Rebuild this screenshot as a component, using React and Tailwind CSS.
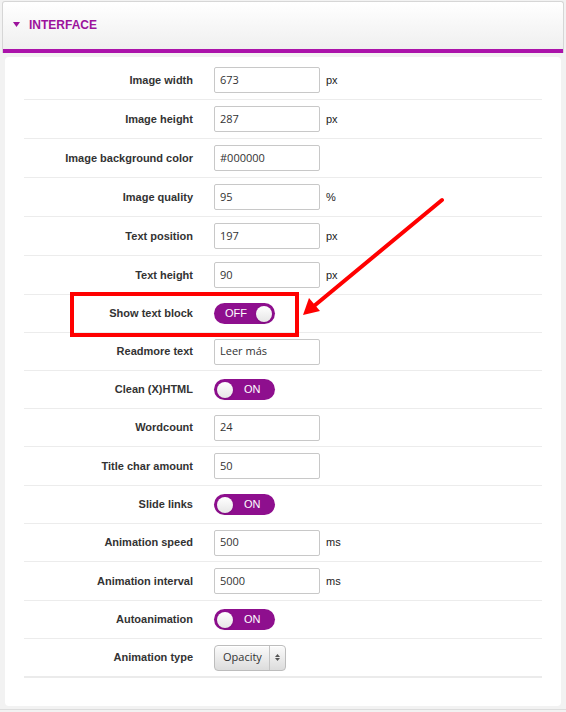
import React from 'react'

const rows = [
  { label: 'Image width', type: 'input', value: '673', unit: 'px', h: 'h-[39px]' },
  { label: 'Image height', type: 'input', value: '287', unit: 'px', h: 'h-[39px]' },
  { label: 'Image background color', type: 'input', value: '#000000', h: 'h-[39px]' },
  { label: 'Image quality', type: 'input', value: '95', unit: '%', h: 'h-[39px]' },
  { label: 'Text position', type: 'input', value: '197', unit: 'px', h: 'h-[39px]' },
  { label: 'Text height', type: 'input', value: '90', unit: 'px', h: 'h-[39px]' },
  { label: 'Show text block', type: 'toggle', on: false, h: 'h-[38px]' },
  { label: 'Readmore text', type: 'input', value: 'Leer más', h: 'h-[38px]' },
  { label: 'Clean (X)HTML', type: 'toggle', on: true, h: 'h-[38px]' },
  { label: 'Wordcount', type: 'input', value: '24', h: 'h-[38px]' },
  { label: 'Title char amount', type: 'input', value: '50', h: 'h-[39px]' },
  { label: 'Slide links', type: 'toggle', on: true, h: 'h-[38px]' },
  { label: 'Animation speed', type: 'input', value: '500', unit: 'ms', h: 'h-[38px]' },
  { label: 'Animation interval', type: 'input', value: '5000', unit: 'ms', h: 'h-[39px]' },
  { label: 'Autoanimation', type: 'toggle', on: true, h: 'h-[38px]' },
  { label: 'Animation type', type: 'select', value: 'Opacity', h: 'h-[39px]' }
]

const Toggle = ({ on }) => (
  <div className="w-[61px] h-[21px] rounded-full bg-[#8e0f8e] flex items-center px-[3px] text-white text-[11px] font-['Liberation_Sans',Arial,sans-serif]">
    {on ? (
      <>
        <span className="w-[16px] h-[16px] rounded-full bg-gradient-to-b from-white to-[#e6e6e6] shadow-sm" />
        <span className="ml-[11px]">ON</span>
      </>
    ) : (
      <>
        <span className="ml-[8px]">OFF</span>
        <span className="ml-auto w-[16px] h-[16px] rounded-full bg-gradient-to-b from-white to-[#e6e6e6] shadow-sm" />
      </>
    )}
  </div>
)

const Field = ({ row }) => {
  if (row.type === 'toggle') return <Toggle on={row.on} />
  if (row.type === 'select') {
    return (
      <div className="w-[72px] h-[26px] rounded-[4px] border border-[#bdbdbd] bg-gradient-to-b from-[#fbfbfb] to-[#dcdcdc] flex items-center font-['Open_Sans',sans-serif] text-[11px] text-[#333] shadow-[inset_0_1px_0_#fff]">
        <span className="pl-[8px] w-[54px]">{row.value}</span>
        <span className="h-full border-l border-[#c4c4c4] flex-1 flex flex-col items-center justify-center gap-[1px]">
          <svg width="5" height="3" viewBox="0 0 5 3"><path d="M0 3 L2.5 0 L5 3 Z" fill="#555" /></svg>
          <svg width="5" height="3" viewBox="0 0 5 3"><path d="M0 0 L2.5 3 L5 0 Z" fill="#555" /></svg>
        </span>
      </div>
    )
  }
  return (
    <div className="flex items-center">
      <div className="w-[106px] h-[26px] border border-[#c8c8c8] rounded-[2px] bg-white flex items-center pl-[5px] font-['Open_Sans',sans-serif] text-[11px] text-[#333]">
        {row.value}
      </div>
      {row.unit && <span className="ml-[6px] text-[11px] text-[#222]">{row.unit}</span>}
    </div>
  )
}

export default function App() {
  return (
    <div className="relative w-[566px] h-[712px] bg-[#f2f2f2] overflow-hidden font-['Liberation_Sans',Arial,sans-serif]">
      <div className="pt-[1px] px-[2px]">
        <div className="h-[52px] border border-[#d6d6d6] border-b-0 rounded-t-[3px] bg-gradient-to-b from-white to-[#eeeeee] flex flex-col">
          <div className="flex-1 flex items-center pl-[10px] pb-[2px]">
            <svg width="7" height="5" viewBox="0 0 7 5" className="mr-[9px]"><path d="M0 0 L7 0 L3.5 5 Z" fill="#9c139c" /></svg>
            <span className="text-[12px] font-bold text-[#9c139c]">INTERFACE</span>
          </div>
          <div className="h-[4px] bg-[#ab13aa]" />
        </div>
      </div>

      <div className="relative mx-[5px] mt-[4px] h-[649px] bg-white rounded-[4px] pt-[4px] px-[19px]">
        {rows.map((row, i) => (
          <div
            key={row.label}
            className={`${row.h} flex items-center ${i === rows.length - 1 ? 'border-b-2 border-[#ebebeb]' : 'border-b border-[#ececec]'}`}
          >
            <div className="w-[169px] text-right text-[11px] font-bold text-[#333]">{row.label}</div>
            <div className="ml-[21px]">
              <Field row={row} />
            </div>
          </div>
        ))}

        <div className="absolute left-[65px] top-[235px] w-[229px] h-[45px] border-4 border-[#ff0000]" />
      </div>

      <div className="mt-[3px] border-t border-[#dcdcdc]" />

      <svg className="absolute left-0 top-0" width="566" height="712" viewBox="0 0 566 712">
        <line x1="442" y1="200" x2="314" y2="306" stroke="#ff0000" strokeWidth="4" strokeLinecap="round" />
        <path d="M303 315 L309 298 L320 311 Z" fill="#ff0000" />
      </svg>
    </div>
  )
}
